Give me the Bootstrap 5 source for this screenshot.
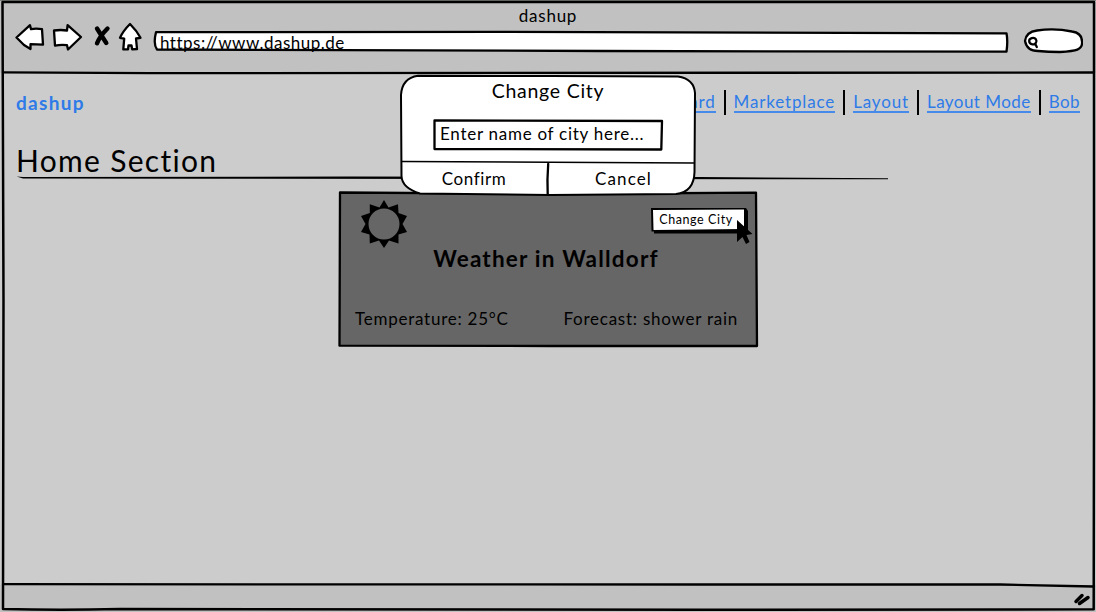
<!DOCTYPE html>
<html lang="en">
<head>
<meta charset="utf-8">
<meta name="viewport" content="width=device-width, initial-scale=1">
<title>dashup</title>
<link href="https://cdn.jsdelivr.net/npm/bootstrap@5.3.0/dist/css/bootstrap.min.css" rel="stylesheet">
<style>
  body { width: 1096px; height: 612px; overflow: hidden; background: #fff; color: #000; font-family: Lato, "Open Sans", sans-serif; font-size: 17px; line-height: 24px; }
  svg { display: block; flex: none; }
  .ink { fill: none; stroke: #000; stroke-width: 2.3; stroke-linejoin: round; stroke-linecap: round; }
  .white { fill: #fff; }
  .sketch { position: absolute; inset: 0; z-index: 0; overflow: visible; }
  .over { position: relative; z-index: 1; }
  .browser { width: 1096px; height: 612px; }
  .chrome-top { height: 73px; background: #c1c1c1; padding-top: 4px; }
  .chrome-bottom { height: 27px; background: #c1c1c1; }
  .page { background: #ccc; height: 512px; padding: 0 16px; }
  .win-title { font-size: 17px; letter-spacing: .75px; }
  .toolbar { height: 32px; margin-top: -6px; padding-left: 15px; }
  .url { width: 856px; height: 22px; margin-left: 10px; margin-top: 8px; padding: 0 0 0 7px; letter-spacing: .5px; white-space: nowrap; }
  .search { margin-left: 14px; }
  .topnav { height: 60px; padding-top: 17px; }
  .brand { color: #2e7be8; font-weight: 700; letter-spacing: 1.3px; font-size: 19px; margin-top: 1px; }
  .links a { color: #2e7be8; text-decoration: none; border-bottom: 2px solid #468bea; line-height: 18px; height: 20px; letter-spacing: .85px; }
  .links a.snug { letter-spacing: .45px; }
  .rule { width: 2px; height: 25px; background: #000; }
  .heading { font-size: 30px; font-weight: 400; line-height: 34px; letter-spacing: 1.3px; margin: 10px 0 0; height: 43px; }
  .weather { width: 419px; height: 155px; margin: 6px auto 0 322px; padding: 8px 11px 0 17px; }
  .weather h2 { font-size: 22.5px; font-weight: 700; line-height: 28px; letter-spacing: 1.2px; margin: -3px 0 0 0; padding-right: 9px; }
  .readings { margin-top: 34px; padding-right: 8px; letter-spacing: .75px; }
  .mini-btn { width: 96px; height: 25px; border: 0; background: none; padding: 0 6px 1px 0; font-size: 12.5px; letter-spacing: .6px; margin: 8px -1px 0 0; }
  .cursor { position: absolute; left: 397px; top: 27px; z-index: 2; }
  .dialog-box { position: absolute; left: 400px; top: 75px; width: 296px; height: 120px; z-index: 5; }
  .dialog-title { font-size: 19.5px; letter-spacing: .75px; padding-top: 4px; height: 45px; }
  .city { width: 230px; height: 31px; margin: 0 auto; padding: 2px 0 0 7px; letter-spacing: .73px; }
  .actions { height: 32px; margin-top: 12px; }
  .actions button { width: 50%; border: 0; background: none; padding: 0; letter-spacing: .6px; color: #000; }
  .actions button + button { letter-spacing: 1.1px; padding-left: 3px; }
</style>
</head>
<body>
<div class="browser position-relative d-flex flex-column">
  <header class="chrome-top">
    <div class="win-title text-center">dashup</div>
    <div class="toolbar d-flex align-items-center">
      <svg width="30" height="32" viewBox="15 22 30 32"><path class="ink white" d="M16.5 37.5 30 25.2 31 29.2Q36 28.2 42 29.2L43 44.6 30.5 44.2V49L24 45Z"/></svg>
      <svg width="38" height="32" viewBox="45 22 38 32"><path class="ink white" d="M54 30.5Q61 29.5 67 30.5L67.6 25.2 81 37 68 49.5 67 45.2Q61 44.5 55 45.6Z"/></svg>
      <svg width="34" height="32" viewBox="83 22 34 32"><path d="M97 28.5Q101 35 106.300 43M107.500 28.500Q100 36 97 43.300" fill="none" stroke="#000" stroke-width="4.400" stroke-linecap="round"/></svg>
      <svg width="26" height="32" viewBox="117 22 26 32"><path class="ink white" d="M130 24Q123 31 120 37.800L124.200 38.600 123.300 49.400H128L128.500 45.500 131.500 45.500 132.200 49.400 137 49 136 38.500 140.500 37.800Q137 31 130 24Z"/></svg>
      <div class="url position-relative">
        <svg class="sketch" width="856" height="22" viewBox="153 31 856 22"><path class="ink white" d="M156 32.200 500 31.800 1006.500 33.300Q1008 41 1006.500 51.700L600 51 157 49.500Q153 44 156 32.200Z"/></svg>
        <span class="over">https://www.dashup.de</span>
      </div>
      <svg class="search" width="60" height="32" viewBox="1023 22 60 32"><path class="ink white" d="M1025 41Q1026 32 1037 30.500 1055 28 1072 31.500 1082 33 1082 41.500C1083 50 1076 51 1060 52Q1048 52 1038 51 1027 51 1025 41Z"/><path class="ink" d="M1029.200 41C1029 38.500 1034 36.500 1036 39.500 1037.500 42 1035.500 44.500 1032.500 44.300 1030.500 44 1029.200 42.500 1029.200 41ZM1035 43.500 1036.800 47"/></svg>
    </div>
  </header>

  <main class="page">
    <nav class="topnav d-flex justify-content-between align-items-start">
      <span class="brand">dashup</span>
      <div class="links d-flex align-items-center">
        <a href="#">Dashboard</a><span class="rule mx-2"></span>
        <a href="#">Marketplace</a><span class="rule mx-2"></span>
        <a href="#">Layout</a><span class="rule mx-2"></span>
        <a href="#" class="snug">Layout Mode</a><span class="rule mx-2"></span>
        <a href="#" class="snug">Bob</a>
      </div>
    </nav>
    <h1 class="heading position-relative">Home Section
      <svg class="sketch" width="874" height="43" viewBox="16 143 874 43"><path d="M16.500 176.500 23 177 350 176.500 700 177 888 178.300V179.300L550 179 200 178.800 23 178.500Z" fill="#000"/></svg>
    </h1>
    <section class="weather position-relative">
      <svg class="sketch" width="419" height="155" viewBox="338 192 419 155"><path class="ink" style="fill:#666" d="M340 192.500 550 194 756 192.700 757 346 550 346 339.500 345.700Z"/></svg>
      <div class="over d-flex justify-content-between align-items-start">
        <svg width="58" height="48" viewBox="355 200 58 48"><path fill-rule="evenodd" d="M384 200 388.500 207.500 398 204.200 398.500 213 407 216 402.500 224 407 232 398.500 234.500 398.500 243.500 389 240.500 384 248 379 240.500 369.800 243.500 369.500 234.500 361 232 365.500 224 361 216 369.800 213 369.800 204.200 379.500 207.500ZM384 208.500A15.500 15.500 0 1 0 384 239.500 15.500 15.500 0 1 0 384 208.500Z"/></svg>
        <button class="mini-btn position-relative" type="button">
          <svg class="sketch" width="96" height="25" viewBox="651 208 96 25"><path fill="#000" d="M651 208H746L748 211V233.500H654V231.500H651.500Z"/><path fill="#fff" d="M653 210 744 209.500V229L653.500 230Z"/></svg>
          <span class="over">Change City</span>
        </button>
      </div>
      <h2 class="over text-center">Weather in Walldorf</h2>
      <div class="readings over d-flex justify-content-between"><span>Temperature: 25°C</span><span>Forecast: shower rain</span></div>
      <svg class="cursor" width="18" height="26" viewBox="735 219 18 26"><path d="M737 220 752.500 234 746.500 235 749.500 242 746 244 742.500 237 737 242Z"/></svg>
    </section>
  </main>

  <footer class="chrome-bottom"></footer>

  <!-- Window outline, bar dividers and resize grip -->
  <svg class="sketch" width="1096" height="612" viewBox="0 0 1096 612">
    <path d="M0 .5H1096" stroke="#7e837d"/>
    <path class="ink" style="stroke-width:2.500" d="M2.500 2H1094V400L1093.700 609.300 700 609.700 120 609Q60 610.500 3 609L3.500 300Z"/>
    <path class="ink" d="M3 72.300 150 73.200 1093 72.500M3 584.200 700 584.500 1000 584.500 1093 586.500"/>
    <path class="ink" style="stroke-width:3.500" d="M1076 601.500 1082 595.500M1079.500 603.500 1088 597.500"/>
  </svg>

  <div class="dialog-box" role="dialog" aria-label="Change City">
    <svg class="sketch" width="296" height="120" viewBox="400 75 296 120">
      <path class="ink white" style="stroke-width:2" d="M418 75.700 550 76 678 76.500Q694 79 695 93L694.500 172Q694 192 676 194L550 195 420 193.500Q402 188 401.500 176L401 95Q402 78 418 75.700Z"/>
      <path class="ink" style="stroke-width:1.500" d="M402 161.500 550 162.300 694 163"/>
      <path class="ink" d="M548.200 164Q547 180 547.700 194"/>
      <path class="ink" d="M434.500 120.500 662 121 661.300 149.500 434.500 149Z"/>
    </svg>
    <div class="dialog-title over text-center">Change City</div>
    <div class="city over">Enter name of city here...</div>
    <div class="actions over d-flex"><button type="button">Confirm</button><button type="button">Cancel</button></div>
  </div>
</div>
<script src="https://cdn.jsdelivr.net/npm/bootstrap@5.3.0/dist/js/bootstrap.bundle.min.js"></script>
</body>
</html>
